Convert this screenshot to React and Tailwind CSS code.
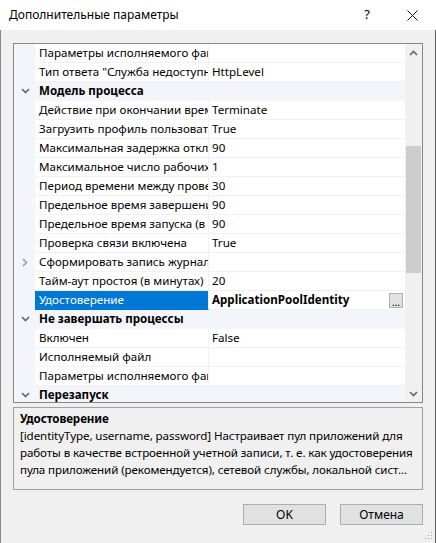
import React from 'react';

const rows = [
  { label: 'Параметры исполняемого файла', value: '' },
  { label: 'Тип ответа "Служба недоступна"', value: 'HttpLevel' },
  { cat: 'Модель процесса' },
  { label: 'Действие при окончании времени простоя', value: 'Terminate' },
  { label: 'Загрузить профиль пользователя', value: 'True' },
  { label: 'Максимальная задержка отклика', value: '90' },
  { label: 'Максимальное число рабочих процессов', value: '1' },
  { label: 'Период времени между проверками', value: '30' },
  { label: 'Предельное время завершения работы', value: '90' },
  { label: 'Предельное время запуска (в секундах)', value: '90' },
  { label: 'Проверка связи включена', value: 'True' },
  { label: 'Сформировать запись журнала', value: '', collapsed: true },
  { label: 'Тайм-аут простоя (в минутах)', value: '20' },
  { label: 'Удостоверение', value: 'ApplicationPoolIdentity', selected: true },
  { cat: 'Не завершать процессы' },
  { label: 'Включен', value: 'False' },
  { label: 'Исполняемый файл', value: '' },
  { label: 'Параметры исполняемого файла', value: '' },
  { cat: 'Перезапуск' },
];

function ChevronDown({ className }) {
  return (
    <svg width="9" height="6" viewBox="0 0 9 6" className={className}>
      <path d="M1 1 L4.5 4.5 L8 1" fill="none" stroke="#666" strokeWidth="1.6" />
    </svg>
  );
}

function ChevronRight() {
  return (
    <svg width="6" height="9" viewBox="0 0 6 9">
      <path d="M1 1 L4.5 4.5 L1 8" fill="none" stroke="#9a9a9a" strokeWidth="1.5" />
    </svg>
  );
}

function Row({ r }) {
  if (r.cat) {
    return (
      <div className="flex h-[19px] shrink-0 items-center border-b border-[#f3f5fa] bg-[#f3f5fa]">
        <div className="flex w-[21px] shrink-0 justify-center pl-[1px]">
          <ChevronDown />
        </div>
        <div className="pl-[4px] font-bold text-black whitespace-nowrap">{r.cat}</div>
      </div>
    );
  }
  return (
    <div className="flex h-[19px] shrink-0">
      <div className="flex w-[21px] shrink-0 items-center justify-center bg-[#f3f5fa] pl-[1px]">
        {r.collapsed && <ChevronRight />}
      </div>
      <div
        className={
          'flex w-[174px] shrink-0 items-center overflow-hidden whitespace-nowrap border-b border-r pl-[4px] ' +
          (r.selected
            ? 'bg-[#0078d7] text-white border-b-[#0078d7] border-r-[#f0f2f6]'
            : 'bg-white text-black border-[#f0f2f6]')
        }
      >
        {r.label}
      </div>
      <div
        className={
          'flex flex-1 items-center justify-between overflow-hidden whitespace-nowrap border-b border-[#f0f2f6] bg-white pl-[3px] pr-[2px] text-black ' +
          (r.selected ? 'font-bold' : '')
        }
      >
        <span>{r.value}</span>
        {r.selected && (
          <span className="flex h-[15px] w-[14px] items-end justify-center border border-[#adadad] bg-[#e1e1e1] pb-[2px] text-[10px] font-normal leading-[6px]">
            ...
          </span>
        )}
      </div>
    </div>
  );
}

export default function App() {
  return (
    <div
      className="relative flex h-[543px] w-[436px] flex-col overflow-hidden bg-[#f0f0f0] text-[11.6px] text-black"
      style={{ fontFamily: '"Noto Sans", "Liberation Sans", sans-serif' }}
    >
      <div className="flex h-[30px] shrink-0 items-center bg-white pl-[9px]">
        <span className="flex-1 text-[12px]">Дополнительные параметры</span>
        <span className="w-[20px] text-center text-[13px]">?</span>
        <span className="ml-[29px] mr-[18px] flex w-[12px] justify-center">
          <svg width="11" height="11" viewBox="0 0 11 11">
            <path d="M0.5 0.5 L10.5 10.5 M10.5 0.5 L0.5 10.5" stroke="#111" strokeWidth="1" />
          </svg>
        </span>
      </div>

      <div className="flex flex-1 flex-col border-l border-r border-l-[#8a8a8a] border-r-[#5a5a5a] pl-[12px] pr-[12px] pt-[13px]">
        <div className="flex h-[360px] shrink-0 border border-[#828790] bg-white">
          <div className="flex flex-1 flex-col overflow-hidden">
            {rows.map((r, i) => (
              <Row key={i} r={r} />
            ))}
          </div>
          <div className="flex w-[17px] shrink-0 flex-col items-center bg-[#f0f0f0]">
            <div className="flex h-[17px] items-center justify-center">
              <ChevronDown className="rotate-180" />
            </div>
            <div className="mt-[85px] h-[127px] w-[15px] bg-[#cdcdcd]" />
            <div className="flex-1" />
            <div className="flex h-[17px] items-center justify-center">
              <ChevronDown />
            </div>
          </div>
        </div>

        <div className="mt-[4px] h-[83px] shrink-0 border border-[#a0a0a0] px-[6px] pt-[2px] leading-[17px] tracking-[-0.1px]">
          <div className="font-bold">Удостоверение</div>
          <div>
            [identityType, username, password] Настраивает пул приложений для работы в качестве встроенной учетной записи, т. е. как удостоверения пула приложений (рекомендуется), сетевой службы, локальной сист...
          </div>
        </div>

        <div className="mt-[14px] flex justify-end gap-[14px]">
          <button className="h-[21px] w-[83px] border border-[#adadad] bg-[#e1e1e1] text-[12px]">OK</button>
          <button className="h-[21px] w-[83px] border border-[#adadad] bg-[#e1e1e1] text-[12px]">Отмена</button>
        </div>
      </div>

      <svg className="absolute bottom-[3px] right-[3px]" width="8" height="8" viewBox="0 0 8 8">
        <rect x="6" y="0" width="1" height="1" fill="#a0a0a0" />
        <rect x="3" y="3" width="1" height="1" fill="#a0a0a0" />
        <rect x="6" y="3" width="1" height="1" fill="#a0a0a0" />
        <rect x="0" y="6" width="1" height="1" fill="#a0a0a0" />
        <rect x="3" y="6" width="1" height="1" fill="#a0a0a0" />
        <rect x="6" y="6" width="1" height="1" fill="#a0a0a0" />
      </svg>
    </div>
  );
}
